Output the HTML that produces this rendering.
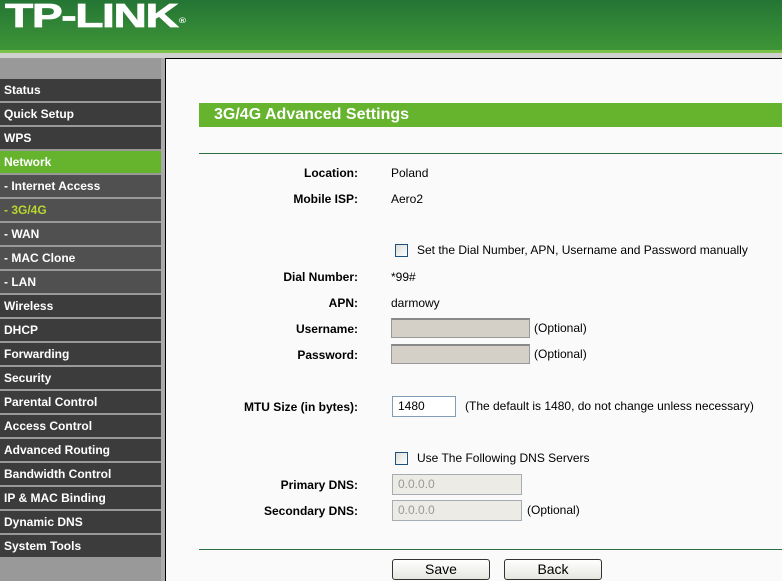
<!DOCTYPE html>
<html><head><style>
*{margin:0;padding:0;box-sizing:border-box}
body{width:782px;height:581px;overflow:hidden;background:#fafafa;font-family:"Liberation Sans",Arial,sans-serif;font-size:12px;color:#000;position:relative}
#hdr{position:absolute;left:0;top:0;width:782px;height:50px;background:linear-gradient(#247535,#3e9536)}
#hl{position:absolute;left:0;top:50px;width:782px;height:3px;background:#7cc24a}
#hg{position:absolute;left:0;top:53px;width:782px;height:5px;background:#d0d0d0}
#hb{position:absolute;left:165px;top:58px;width:617px;height:1px;background:#000}
#logo{position:absolute;left:5px;top:-2px;color:#fff;font:bold 33px/36px "Liberation Sans",Arial,sans-serif;letter-spacing:-1px;transform:scaleX(1.4);transform-origin:left;-webkit-text-stroke:0.7px #fff}
#logo sup{font-size:7px;vertical-align:top;position:relative;top:6px;-webkit-text-stroke:0;margin-left:1px}
#side{position:absolute;left:0;top:58px;width:161px;height:523px;background:#999}
#sb{position:absolute;left:161px;top:58px;width:4px;height:523px;background:#aaa}
#sb2{position:absolute;left:165px;top:58px;width:1px;height:523px;background:#000}
.it{position:absolute;left:0;width:161px;height:22px;background:#3c3c3c;color:#fff;font-weight:bold;font-size:12px;line-height:22px;padding-left:4px}
.sub{background:#505050}
.act{background:#66b32e}
.cur{color:#b8d630}
.bar{position:absolute;left:199px;top:103px;width:583px;height:24px;background:#66b32e;color:#fff;font-weight:bold;font-size:16px;line-height:24px;padding-left:15px}
.ln{position:absolute;left:199px;width:583px;height:1px;background:#2b6f45}
.l{position:absolute;right:424px;text-align:right;line-height:14px;font-weight:bold}
.v{position:absolute;left:391px;line-height:14px}
.inp{position:absolute;left:391px;border:1px solid #999;border-top:2px solid #888;background:#d4d0c8;height:20px}
.box{position:absolute;border:1px solid #7f9db9;background:#fff;height:21px;padding-left:5px;line-height:19px}
.dis{background:#ecebe6;color:#999;border-color:#a5acb2}
.cb{position:absolute;left:395px;width:13px;height:13px;border:1px solid #1c5180;background:linear-gradient(135deg,#dcdcd7,#fff)}
.btn{position:absolute;top:559px;width:98px;height:21px;border:1px solid #333;border-radius:3px;background:linear-gradient(#fff,#e6e6e0);text-align:center;line-height:19px;font-size:14px}
</style></head><body>
<div id="hdr"><div id="logo">TP-LINK<sup>®</sup></div></div>
<div id="hl"></div><div id="hg"></div><div id="hb"></div>
<div id="side"></div><div id="sb"></div><div id="sb2"></div>
<div class="it" style="top:79px">Status</div>
<div class="it" style="top:103px">Quick Setup</div>
<div class="it" style="top:127px">WPS</div>
<div class="it act" style="top:151px">Network</div>
<div class="it sub" style="top:175px">- Internet Access</div>
<div class="it sub cur" style="top:199px">- 3G/4G</div>
<div class="it sub" style="top:223px">- WAN</div>
<div class="it sub" style="top:247px">- MAC Clone</div>
<div class="it sub" style="top:271px">- LAN</div>
<div class="it" style="top:295px">Wireless</div>
<div class="it" style="top:319px">DHCP</div>
<div class="it" style="top:343px">Forwarding</div>
<div class="it" style="top:367px">Security</div>
<div class="it" style="top:391px">Parental Control</div>
<div class="it" style="top:415px">Access Control</div>
<div class="it" style="top:439px">Advanced Routing</div>
<div class="it" style="top:463px">Bandwidth Control</div>
<div class="it" style="top:487px">IP &amp; MAC Binding</div>
<div class="it" style="top:511px">Dynamic DNS</div>
<div class="it" style="top:535px">System Tools</div>
<div class="bar">3G/4G Advanced Settings</div>
<div class="ln" style="top:153px"></div>
<div class="l" style="top:166px">Location:</div><div class="v" style="top:166px">Poland</div>
<div class="l" style="top:192px">Mobile ISP:</div><div class="v" style="top:192px">Aero2</div>
<div class="cb" style="top:244px"></div><div class="v" style="left:417px;top:243px">Set the Dial Number, APN, Username and Password manually</div>
<div class="l" style="top:270px">Dial Number:</div><div class="v" style="top:270px">*99#</div>
<div class="l" style="top:296px">APN:</div><div class="v" style="top:296px">darmowy</div>
<div class="l" style="top:322px">Username:</div><div class="inp" style="top:318px;width:139px"></div><div class="v" style="left:534px;top:321px">(Optional)</div>
<div class="l" style="top:348px">Password:</div><div class="inp" style="top:344px;width:139px"></div><div class="v" style="left:534px;top:347px">(Optional)</div>
<div class="l" style="top:400px">MTU Size (in bytes):</div><div class="box" style="left:392px;top:396px;width:64px">1480</div><div class="v" style="left:465px;top:399px">(The default is 1480, do not change unless necessary)</div>
<div class="cb" style="top:452px"></div><div class="v" style="left:417px;top:451px">Use The Following DNS Servers</div>
<div class="l" style="top:478px">Primary DNS:</div><div class="box dis" style="left:392px;top:474px;width:130px">0.0.0.0</div>
<div class="l" style="top:504px">Secondary DNS:</div><div class="box dis" style="left:392px;top:500px;width:130px">0.0.0.0</div><div class="v" style="left:527px;top:503px">(Optional)</div>
<div class="ln" style="top:549px"></div>
<div class="btn" style="left:392px">Save</div>
<div class="btn" style="left:504px">Back</div>
</body></html>
